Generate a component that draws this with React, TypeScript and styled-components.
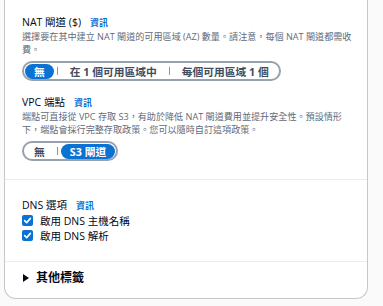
import styled, { createGlobalStyle } from 'styled-components'

const GlobalStyle = createGlobalStyle`
	body {
		margin: 0;
		background: #fafafa;
		font-family: 'Open Sans', 'Noto Sans CJK TC', sans-serif;
		color: #000716;
	}
`

interface SegmentOption {
	id: string
	label: string
}

const SegmentedControl = ({ options, selected }: { options: SegmentOption[]; selected: string }) => (
	<SegmentGroup>
		{options.map((option, index) => (
			<SegmentSlot key={option.id}>
				{index > 0 ? <Separator /> : null}
				<Segment $active={option.id === selected}>{option.label}</Segment>
			</SegmentSlot>
		))}
	</SegmentGroup>
)

const Checkbox = ({ label }: { label: string }) => (
	<CheckRow>
		<CheckBox>
			<svg width='9' height='9' viewBox='0 0 9 9'>
				<polyline points='1.6,4.6 3.7,6.6 7.4,2.4' fill='none' stroke='#fff' strokeWidth='1.6' strokeLinecap='round' strokeLinejoin='round' />
			</svg>
		</CheckBox>
		{label}
	</CheckRow>
)

const App = () => {
	return (
		<Page>
			<GlobalStyle />
			<Card>
				<Section>
					<Field>
						<LabelRow>
							<Title>NAT 閘道 ($)</Title>
							<InfoLink>資訊</InfoLink>
						</LabelRow>
						<Description>
							選擇要在其中建立 NAT 閘道的可用區域 (AZ) 數量。請注意，每個 NAT 閘道都需收
							<br />
							費。
						</Description>
						<SegmentedControl
							selected='none'
							options={[
								{ id: 'none', label: '無' },
								{ id: 'one', label: '在 1 個可用區域中' },
								{ id: 'each', label: '每個可用區域 1 個' },
							]}
						/>
					</Field>
					<Field>
						<LabelRow>
							<Title>VPC 端點</Title>
							<InfoLink>資訊</InfoLink>
						</LabelRow>
						<Description>
							端點可直接從 VPC 存取 S3，有助於降低 NAT 閘道費用並提升安全性。預設情形
							<br />
							下，端點會採行完整存取政策。您可以隨時自訂這項政策。
						</Description>
						<SegmentedControl
							selected='s3'
							options={[
								{ id: 'none', label: '無' },
								{ id: 's3', label: 'S3 閘道' },
							]}
						/>
					</Field>
				</Section>
				<DnsSection>
					<LabelRow>
						<Title>DNS 選項</Title>
						<InfoLink>資訊</InfoLink>
					</LabelRow>
					<Checkbox label='啟用 DNS 主機名稱' />
					<Checkbox label='啟用 DNS 解析' />
				</DnsSection>
				<ExpandSection>
					<svg width='6' height='8' viewBox='0 0 6 8'>
						<polygon points='0,0 6,4 0,8' fill='#000716' />
					</svg>
					<ExpandTitle>其他標籤</ExpandTitle>
				</ExpandSection>
			</Card>
		</Page>
	)
}

export default App

const Page = styled.div`
	padding: 0 15px 7px 4px;
`

const Card = styled.div`
	background: #ffffff;
	border: 1px solid #c6c6cd;
	border-top: none;
	border-radius: 0 0 12px 12px;
`

const Section = styled.div`
	padding: 15px 17px 18px;
`

const Field = styled.div`
	& + & {
		margin-top: 14px;
	}
`

const LabelRow = styled.div`
	display: flex;
	align-items: center;
	height: 15px;
`

const Title = styled.span`
	font-size: 10.5px;
	line-height: 15px;
	color: #000716;
`

const InfoLink = styled.span`
	margin-left: 9px;
	font-size: 9px;
	font-weight: 700;
	color: #0972d3;
`

const Description = styled.p`
	margin: 0;
	font-size: 9.1px;
	line-height: 13px;
	color: #5f6b7a;
	white-space: nowrap;
`

const SegmentGroup = styled.div`
	display: inline-flex;
	align-items: center;
	box-sizing: border-box;
	height: 20px;
	margin-top: 5px;
	padding: 0 1px;
	border: 2px solid #98a1ad;
	border-radius: 12px;
`

const SegmentSlot = styled.div`
	display: flex;
	align-items: center;
`

const Separator = styled.span`
	width: 1px;
	height: 8px;
	margin: 0 3px;
	background: #8c96a3;
`

const Segment = styled.span<{ $active: boolean }>`
	display: flex;
	align-items: center;
	height: 15px;
	padding: 0 9px;
	border-radius: 8px;
	font-size: 10.75px;
	font-weight: 700;
	white-space: nowrap;
	color: ${({ $active }) => ($active ? '#ffffff' : '#414d5c')};
	background: ${({ $active }) => ($active ? '#0972d3' : 'transparent')};
`

const DnsSection = styled.div`
	padding: 18px 17px;
	border-top: 1px solid #e9ebed;
`

const CheckRow = styled.div`
	display: flex;
	align-items: center;
	height: 15px;
	font-size: 10.5px;
	color: #000716;
`

const CheckBox = styled.span`
	display: flex;
	align-items: center;
	justify-content: center;
	width: 11px;
	height: 11px;
	margin-right: 7px;
	border-radius: 2px;
	background: #0972d3;
`

const ExpandSection = styled.div`
	display: flex;
	align-items: center;
	height: 16px;
	padding: 8px 17px 12px 18px;
	border-top: 1px solid #e9ebed;
`

const ExpandTitle = styled.span`
	margin-left: 7px;
	font-size: 12px;
	font-weight: 700;
	line-height: 16px;
	color: #000716;
`
